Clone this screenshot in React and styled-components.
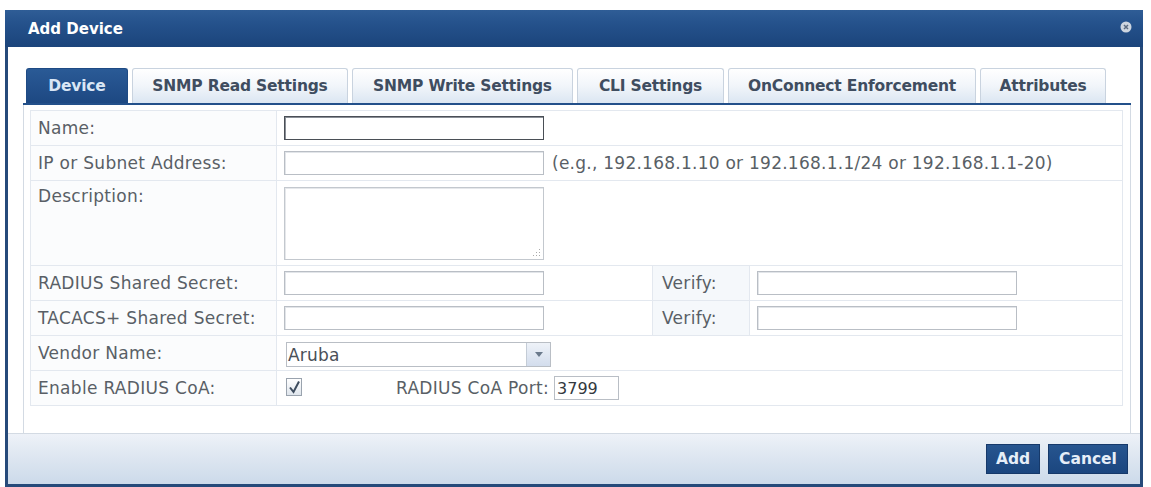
import React from "react";
import styled, { createGlobalStyle } from "styled-components";

const GlobalStyle = createGlobalStyle`
  html, body {
    margin: 0;
    padding: 0;
    background: #ffffff;
  }
  body {
    font-family: "DejaVu Sans", Verdana, sans-serif;
  }
`;

const tabs = [
  { label: "Device", width: 102, active: true },
  { label: "SNMP Read Settings", width: 216 },
  { label: "SNMP Write Settings", width: 221 },
  { label: "CLI Settings", width: 147 },
  { label: "OnConnect Enforcement", width: 248 },
  { label: "Attributes", width: 126 },
];

export default function App() {
  return (
    <>
      <GlobalStyle />
      <Page>
        <Dialog>
          <TitleBar>
            <Title>Add Device</Title>
            <CloseIcon viewBox="0 0 12 12">
              <circle cx="6" cy="6" r="5.5" fill="#cdd5df" />
              <path d="M4 4 L8 8 M8 4 L4 8" stroke="#5b6b80" strokeWidth="1.5" />
            </CloseIcon>
          </TitleBar>
          <Body>
            <TabStrip>
              {tabs.map((t) => (
                <Tab key={t.label} $active={t.active} $width={t.width}>
                  {t.label}
                </Tab>
              ))}
            </TabStrip>
            <Panel>
              <FormTable>
                <Row>
                  <Label>Name:</Label>
                  <Field $span>
                    <TextInput $focused />
                  </Field>
                </Row>
                <Row>
                  <Label>IP or Subnet Address:</Label>
                  <Field $span>
                    <TextInput />
                    <Hint>(e.g., 192.168.1.10 or 192.168.1.1/24 or 192.168.1.1-20)</Hint>
                  </Field>
                </Row>
                <Row $tall>
                  <Label $top>Description:</Label>
                  <Field $span $top>
                    <TextArea>
                      <Grip viewBox="0 0 8 8">
                        <rect x="6" y="0" width="1" height="1" fill="#aaa" />
                        <rect x="3" y="3" width="1" height="1" fill="#aaa" />
                        <rect x="6" y="3" width="1" height="1" fill="#aaa" />
                        <rect x="0" y="6" width="1" height="1" fill="#aaa" />
                        <rect x="3" y="6" width="1" height="1" fill="#aaa" />
                        <rect x="6" y="6" width="1" height="1" fill="#aaa" />
                      </Grip>
                    </TextArea>
                  </Field>
                </Row>
                <Row>
                  <Label>RADIUS Shared Secret:</Label>
                  <Field>
                    <TextInput />
                  </Field>
                  <VerifyLabel>Verify:</VerifyLabel>
                  <Field>
                    <TextInput />
                  </Field>
                </Row>
                <Row>
                  <Label>TACACS+ Shared Secret:</Label>
                  <Field>
                    <TextInput />
                  </Field>
                  <VerifyLabel>Verify:</VerifyLabel>
                  <Field>
                    <TextInput />
                  </Field>
                </Row>
                <Row>
                  <Label>Vendor Name:</Label>
                  <Field $span>
                    <Select>
                      <SelectValue>Aruba</SelectValue>
                      <SelectArrow>
                        <svg width="8" height="5" viewBox="0 0 8 5">
                          <path d="M0 0 L8 0 L4 5 Z" fill="#6b7a8c" />
                        </svg>
                      </SelectArrow>
                    </Select>
                  </Field>
                </Row>
                <Row>
                  <Label>Enable RADIUS CoA:</Label>
                  <Field $span>
                    <CheckBox>
                      <svg width="13" height="14" viewBox="0 0 13 14">
                        <path d="M2 7.5 L5.5 12 L11 1.5" stroke="#3d4c5e" strokeWidth="2" fill="none" />
                      </svg>
                    </CheckBox>
                    <PortLabel>RADIUS CoA Port:</PortLabel>
                    <PortInput>3799</PortInput>
                  </Field>
                </Row>
              </FormTable>
            </Panel>
          </Body>
          <Footer>
            <Button $width={54}>Add</Button>
            <Button $width={80}>Cancel</Button>
          </Footer>
        </Dialog>
      </Page>
    </>
  );
}

const Page = styled.div`
  padding: 10px 8px 0 5px;
  height: 487px;
  box-sizing: border-box;
`;

const Dialog = styled.div`
  width: 1138px;
  height: 477px;
  box-sizing: border-box;
  border: 3px solid #264a7a;
  border-top: 0;
  display: flex;
  flex-direction: column;
  background: #ffffff;
`;

const TitleBar = styled.div`
  height: 37px;
  margin: 0 -3px;
  background: linear-gradient(#2f5d96 0%, #25528c 35%, #1b447b 100%);
  display: flex;
  align-items: center;
  justify-content: space-between;
  padding: 0 11px 0 23px;
  flex-shrink: 0;
`;

const Title = styled.div`
  color: #ffffff;
  font-weight: bold;
  font-size: 15px;
`;

const CloseIcon = styled.svg`
  width: 12px;
  height: 12px;
  margin-top: -4px;
`;

const Body = styled.div`
  flex: 1;
  padding: 21px 9px 0 15px;
  display: flex;
  flex-direction: column;
`;

const TabStrip = styled.div`
  display: flex;
  gap: 4px;
  padding-left: 3px;
  height: 35px;
  border-bottom: 2px solid #23508a;
`;

const Tab = styled.div`
  width: ${(p) => p.$width}px;
  box-sizing: border-box;
  display: flex;
  align-items: center;
  justify-content: center;
  font-weight: bold;
  font-size: 15.5px;
  letter-spacing: -0.2px;
  border: 1px solid ${(p) => (p.$active ? "#1e4a84" : "#c9d3df")};
  border-bottom: 0;
  border-radius: 3px 3px 0 0;
  color: ${(p) => (p.$active ? "#d9e6f5" : "#3f4d60")};
  background: ${(p) =>
    p.$active
      ? "linear-gradient(#2a5a96, #1d4882)"
      : "linear-gradient(#ffffff 0%, #f1f5fa 50%, #dbe6f2 100%)"};
`;

const Panel = styled.div`
  flex: 1;
  border: 1px solid #d3dae3;
  border-top: 0;
  border-bottom: 0;
  padding: 5px 7px 0 6px;
`;

const FormTable = styled.div`
  border: 1px solid #e3e8ef;
  border-bottom: 0;
  display: flex;
  flex-direction: column;
`;

const Row = styled.div`
  display: grid;
  grid-template-columns: 246px 375px 98px 1fr;
  height: ${(p) => (p.$tall ? 85 : 35)}px;
  border-bottom: 1px solid #e3e8ef;
  box-sizing: border-box;
`;

const Label = styled.div`
  display: flex;
  align-items: ${(p) => (p.$top ? "flex-start" : "center")};
  padding: ${(p) => (p.$top ? "5px" : "0")} 0 0 7px;
  font-size: 17px;
  letter-spacing: 0.3px;
  color: #595f66;
  background: #fbfcfd;
  border-right: 1px solid #e3e8ef;
  white-space: nowrap;
`;

const VerifyLabel = styled(Label)`
  padding-left: 9px;
  background: #f5f8fb;
  border-left: 1px solid #e3e8ef;
`;

const Field = styled.div`
  grid-column: ${(p) => (p.$span ? "2 / 5" : "auto")};
  display: flex;
  align-items: ${(p) => (p.$top ? "flex-start" : "center")};
  padding: ${(p) => (p.$top ? "6px" : "0")} 0 0 7px;
`;

const TextInput = styled.div`
  width: 260px;
  height: 24px;
  box-sizing: border-box;
  border: 1px solid ${(p) => (p.$focused ? "#4a4f56" : "#b9bec5")};
  box-shadow: inset 1px 1px 0 ${(p) => (p.$focused ? "#8a8f96" : "#e2e5e9")};
  background: #ffffff;
  flex-shrink: 0;
`;

const Hint = styled.span`
  margin-left: 8px;
  font-size: 17px;
  letter-spacing: 0.25px;
  color: #595f66;
  white-space: nowrap;
`;

const TextArea = styled.div`
  width: 260px;
  height: 73px;
  box-sizing: border-box;
  border: 1px solid #c3c8ce;
  box-shadow: inset 1px 1px 0 #e6e8eb;
  position: relative;
`;

const Grip = styled.svg`
  position: absolute;
  right: 2px;
  bottom: 2px;
  width: 8px;
  height: 8px;
`;

const Select = styled.div`
  width: 265px;
  height: 25px;
  box-sizing: border-box;
  margin: 3px 0 0 2px;
  border: 1px solid #b9bec5;
  display: flex;
  background: #ffffff;
`;

const SelectValue = styled.div`
  flex: 1;
  display: flex;
  align-items: center;
  padding-left: 1px;
  font-size: 17px;
  letter-spacing: 0.2px;
  color: #4a5058;
`;

const SelectArrow = styled.div`
  width: 23px;
  display: flex;
  align-items: center;
  justify-content: center;
  border-left: 1px solid #c4ccd6;
  background: linear-gradient(#eef2f8, #d3dded);
`;

const CheckBox = styled.div`
  width: 16px;
  height: 18px;
  margin: -3px 0 0 2px;
  box-sizing: border-box;
  border: 1px solid #9aa3ae;
  background: linear-gradient(#ffffff, #dfe5ec);
  display: flex;
  align-items: center;
  justify-content: center;
`;

const PortLabel = styled.span`
  margin-left: 94px;
  font-size: 17px;
  letter-spacing: 0.3px;
  color: #595f66;
  white-space: nowrap;
`;

const PortInput = styled.div`
  width: 65px;
  height: 24px;
  margin-left: 5px;
  box-sizing: border-box;
  border: 1px solid #b9bec5;
  font-size: 16px;
  color: #333940;
  display: flex;
  align-items: center;
  padding-left: 2px;
`;

const Footer = styled.div`
  height: 51px;
  flex-shrink: 0;
  border-top: 1px solid #d3dae3;
  background: linear-gradient(#eef2f8 0%, #e3eaf3 30%, #ccdaea 100%);
  display: flex;
  justify-content: flex-end;
  align-items: flex-start;
  gap: 8px;
  padding: 10px 12px 0 0;
  box-sizing: border-box;
`;

const Button = styled.div`
  width: ${(p) => p.$width}px;
  height: 30px;
  box-sizing: border-box;
  display: flex;
  align-items: center;
  justify-content: center;
  background: linear-gradient(#27558f, #1b467f);
  border: 1px solid #16396a;
  color: #e6eef8;
  font-weight: bold;
  font-size: 15.5px;
`;
